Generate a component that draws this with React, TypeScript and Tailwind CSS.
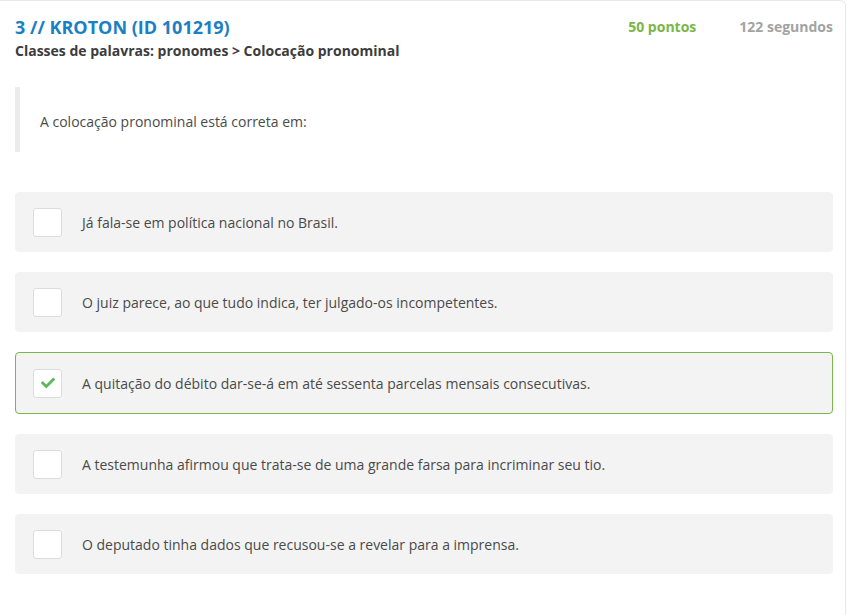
import { FaCheck } from 'react-icons/fa'

const options = [
  { text: 'Já fala-se em política nacional no Brasil.', checked: false },
  { text: 'O juiz parece, ao que tudo indica, ter julgado-os incompetentes.', checked: false },
  { text: 'A quitação do débito dar-se-á em até sessenta parcelas mensais consecutivas.', checked: true },
  { text: 'A testemunha afirmou que trata-se de uma grande farsa para incriminar seu tio.', checked: false },
  { text: 'O deputado tinha dados que recusou-se a revelar para a imprensa.', checked: false },
]

export default function App() {
  return (
    <div className="min-h-screen bg-white font-['Open_Sans',sans-serif]">
      <div className="w-[846px] min-h-[615px] border-t border-r border-[#e8e8e8] rounded-tr-md pl-[15px] pr-[12px] pt-[14px]">
        <div className="flex items-start justify-between">
          <div>
            <h1 className="text-[18px] leading-[24px] font-bold text-[#1b7fc4]">3 // KROTON (ID 101219)</h1>
            <p className="mt-[2px] text-[14px] leading-[20px] font-bold text-[#3c3c3c]">
              Classes de palavras: pronomes &gt; Colocação pronominal
            </p>
          </div>
          <div className="flex gap-[43px] pt-[1px] text-[14px] font-bold">
            <span className="text-[#7ab648]">50 pontos</span>
            <span className="text-[#a3a3a3]">122 segundos</span>
          </div>
        </div>

        <div className="mt-[26px] border-l-[5px] border-[#ececec] pl-[20px] pt-[4px] h-[65px] flex items-center">
          <p className="text-[14px] text-[#4a4a4a]">A colocação pronominal está correta em:</p>
        </div>

        <div className="mt-[40px] flex flex-col gap-[20px]">
          {options.map((o, i) => (
            <div
              key={i}
              className={`rounded-[4px] bg-[#f3f3f3] flex items-center pl-[17px] ${
                o.checked ? 'h-[62px] border border-[#7ab648]' : 'h-[60px] border border-[#f3f3f3]'
              }`}
            >
              <div className="w-[29px] h-[29px] bg-white border border-[#dcdcdc] rounded-[3px] flex items-center justify-center shrink-0">
                {o.checked && <FaCheck className="text-[#5cb85c] w-[14px] h-[14px]" />}
              </div>
              <span className="ml-[20px] text-[14px] text-[#4a4a4a]">{o.text}</span>
            </div>
          ))}
        </div>
      </div>
    </div>
  )
}
